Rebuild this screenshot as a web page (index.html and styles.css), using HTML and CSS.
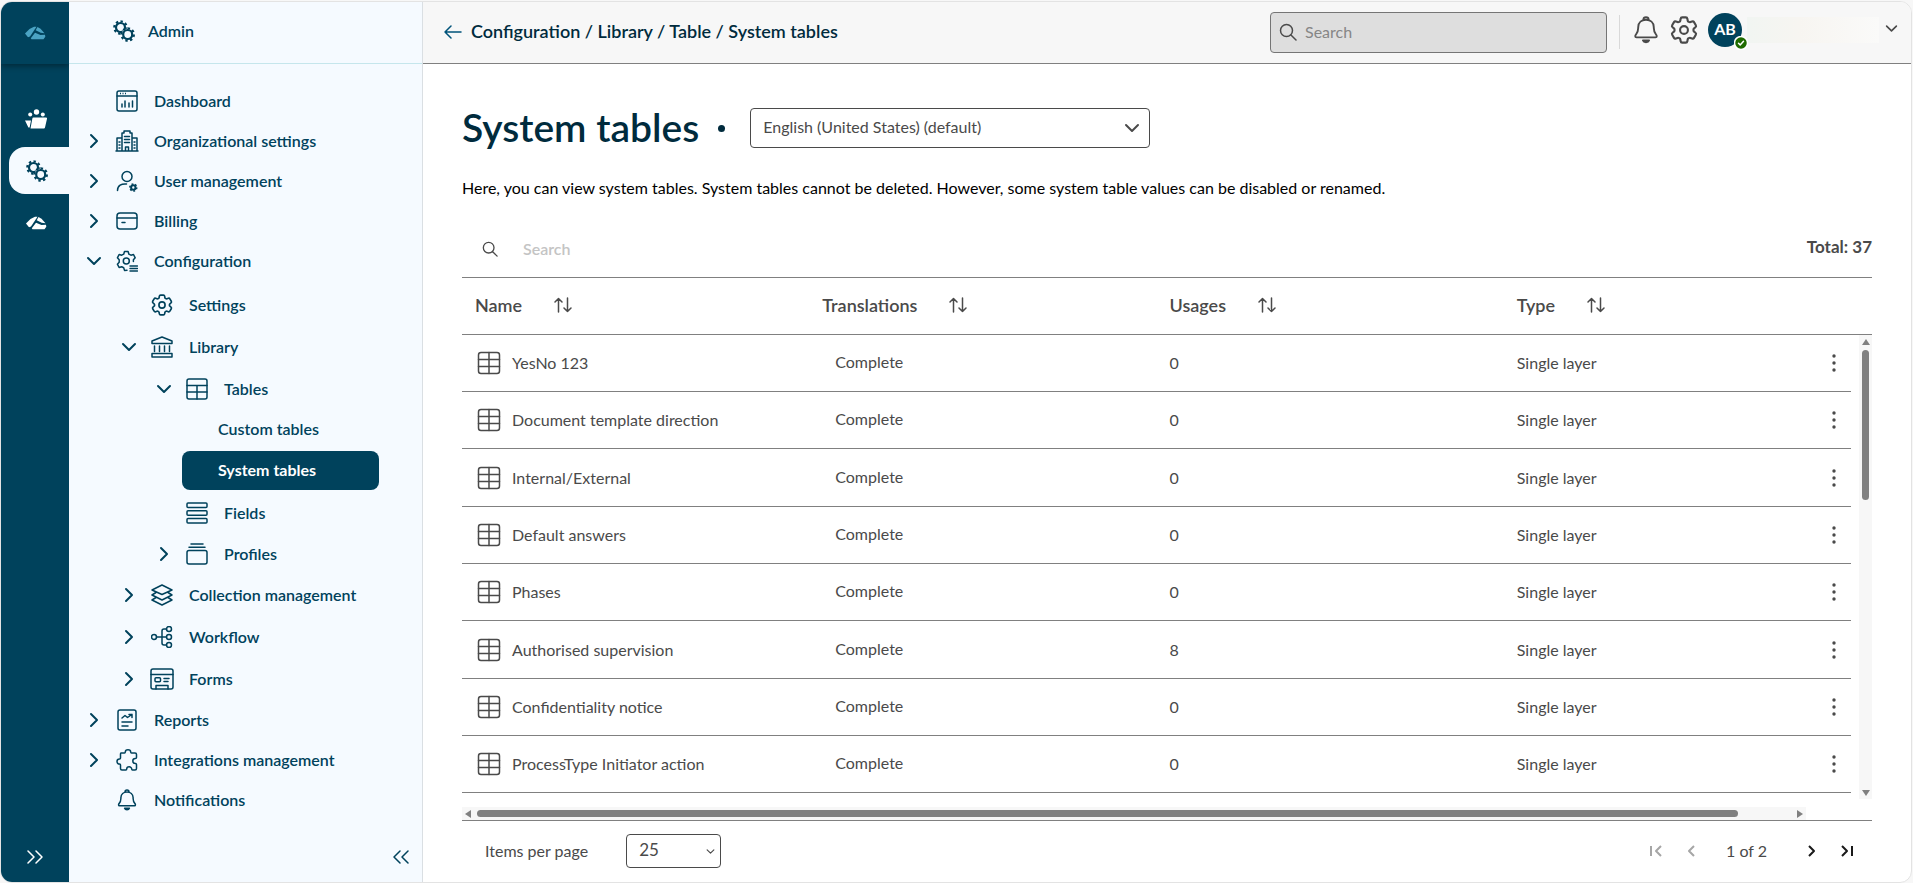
FILE: index.html
```
<!DOCTYPE html>
<html lang="en">
<head>
    <meta charset="UTF-8">
    <meta name="viewport" content="width=device-width, initial-scale=1.0">
    <title>System tables</title>
    <link rel="stylesheet" href="styles.css">
</head>
<body>
    <!-- Shared icons -->
    <svg class="sprite" aria-hidden="true">
        <symbol id="i-right" viewBox="0 0 16 16"><path d="M5 2l6 6-6 6" stroke-width="2"/></symbol>
        <symbol id="i-down" viewBox="0 0 16 16"><path d="M2 5l6 6 6-6" stroke-width="2"/></symbol>
        <symbol id="i-gear" viewBox="2 2 20 20">
            <path d="M9.594 3.94c.09-.542.56-.94 1.11-.94h2.593c.55 0 1.02.398 1.11.94l.213 1.281c.063.374.313.686.645.87.074.04.147.083.22.127.325.196.72.257 1.075.124l1.217-.456a1.125 1.125 0 0 1 1.37.49l1.296 2.247a1.125 1.125 0 0 1-.26 1.431l-1.003.827c-.293.241-.438.613-.43.992a7.723 7.723 0 0 1 0 .255c-.008.378.137.75.43.991l1.004.827c.424.35.534.955.26 1.43l-1.298 2.247a1.125 1.125 0 0 1-1.369.491l-1.217-.456c-.355-.133-.75-.072-1.076.124a6.47 6.47 0 0 1-.22.128c-.331.183-.581.495-.644.869l-.213 1.281c-.09.543-.56.94-1.11.94h-2.594c-.55 0-1.019-.398-1.11-.94l-.213-1.281c-.062-.374-.312-.686-.644-.87a6.52 6.52 0 0 1-.22-.127c-.325-.196-.72-.257-1.076-.124l-1.217.456a1.125 1.125 0 0 1-1.369-.49l-1.297-2.247a1.125 1.125 0 0 1 .26-1.431l1.004-.827c.292-.24.437-.613.43-.991a6.932 6.932 0 0 1 0-.255c.007-.38-.138-.751-.43-.992l-1.004-.827a1.125 1.125 0 0 1-.26-1.43l1.297-2.247a1.125 1.125 0 0 1 1.37-.491l1.216.456c.356.133.751.072 1.076-.124.072-.044.146-.086.22-.128.332-.183.582-.495.644-.869l.214-1.28Z"/>
            <circle cx="12" cy="12" r="2.8"/>
        </symbol>
        <symbol id="i-gears" viewBox="0 0 22 22">
            <circle cx="7.500" cy="7.500" r="4.500" stroke-width="2.200"/>
            <circle cx="7.500" cy="7.500" r="6.200" stroke-width="2.200" pathLength="16" stroke-dasharray="1 1" stroke-linecap="butt"/>
            <circle class="gap" cx="14.700" cy="14.500" r="6"/>
            <circle cx="14.700" cy="14.500" r="4.500" stroke-width="2.200"/>
            <circle cx="14.700" cy="14.500" r="6.200" stroke-width="2.200" pathLength="16" stroke-dasharray="1 1" stroke-linecap="butt"/>
        </symbol>
        <symbol id="i-bell" viewBox="0 0 22 22">
            <path d="M3.500 16.800c-1.300 0-1.100-1.600-.3-2.400 1.800-1.800 1.600-3.400 1.700-5.800C5 5.200 7.600 3 11 3s6 2.200 6.100 5.600c.1 2.400-.1 4 1.700 5.800.8.8 1 2.400-.3 2.400zM9 2.800C9 .4 13 .4 13 2.800M8.600 19.200a2.500 2 0 0 0 4.800 0z"/>
        </symbol>
        <symbol id="i-search" viewBox="0 0 18 18"><circle cx="7.500" cy="7.500" r="6"/><path d="M12 12l5 5"/></symbol>
        <symbol id="i-logo" viewBox="0 0 22 14">
            <path d="M1 7.500L5.500 3 10 .8h2.500L6 10.500l-2 .8z" class="solid"/>
            <path d="M13.500 1l3 1.700 4 4.500-3.800-.4-5-2.600z" class="solid"/>
            <path d="M6.800 12.300L11 6.800l5.500 2.200 4.500-.2.300 2-1.800 2.400H7.500z" class="solid"/>
        </symbol>
        <symbol id="i-grid" viewBox="0 0 24 24">
            <rect x="1.500" y="1.500" width="21" height="21" rx="2.500"/><path d="M12 1.500v21M1.500 8.500h21M1.500 15.500h21"/>
        </symbol>
        <symbol id="i-sort" viewBox="0 0 18 16"><path d="M4.500 15V1.500M1 5l3.500-3.500L8 5M13.500 1v13.500M10 11l3.500 3.500L17 11"/></symbol>
    </svg>

    <div class="app">
        <aside class="rail">
            <a class="rail-logo" href="#" aria-label="Home"><svg class="logo"><use href="#i-logo"/></svg></a>
            <nav class="rail-nav">
                <a href="#" aria-label="Cases">
                    <svg viewBox="0 0 22 20"><g class="solid"><circle cx="11.500" cy="3" r="2.700"/><circle cx="5.200" cy="5.600" r="2"/><circle cx="17.800" cy="5.600" r="2"/><path d="M8.500 8.500H21a1 1 0 0 1 1 1.200l-2 8.800a1.200 1.200 0 0 1-1.200 1H5.500l1.800-9.800a1.300 1.300 0 0 1 1.200-1.200zM0 11.500h6L4.600 18.500H3.400z"/></g></svg>
                </a>
                <a class="active" href="#" aria-label="Admin"><svg><use href="#i-gears"/></svg></a>
                <a href="#" aria-label="Apps"><svg class="logo"><use href="#i-logo"/></svg></a>
            </nav>
            <button class="rail-expand" aria-label="Expand"><svg viewBox="0 0 16 14"><path d="M1 1l6 6-6 6M9 1l6 6-6 6"/></svg></button>
        </aside>

        <aside class="sidebar">
            <div class="sidebar-head"><svg><use href="#i-gears"/></svg>Admin</div>
            <ul class="menu">
                <li><div class="item leaf"><a href="#">
                    <svg viewBox="0 0 22 22"><rect x="1" y="1" width="20" height="20" rx="2"/><path d="M1 6h20M6 17v-3M9 17v-6M13 17v-4M16.500 17v-6"/><path d="M4 3.600h6" stroke-dasharray="1 1.500" stroke-linecap="butt"/></svg>Dashboard</a></div></li>
                <li><div class="item"><button aria-label="Toggle"><svg><use href="#i-right"/></svg></button><a href="#">
                    <svg class="wide" viewBox="0 0 24 22"><path d="M1 21h22M2 21V8h5M17 8h5v13M7 21V3h2V1h6v2h2v18M10.500 21v-4h3v4M9.500 6.500h5M9.500 9.500h5M9.500 12.500h5M4 12h1M4 15h1M4 18h1M19 12h1M19 15h1M19 18h1"/></svg>Organizational settings</a></div></li>
                <li><div class="item"><button aria-label="Toggle"><svg><use href="#i-right"/></svg></button><a href="#">
                    <svg viewBox="0 0 22 22"><circle cx="11" cy="6.500" r="5"/><path d="M1.500 20.500c0-5 4-7 9-6.500"/><circle cx="17.300" cy="17.500" r="2.200" stroke-width="2"/><circle cx="17.300" cy="17.500" r="3.500" pathLength="12" stroke-dasharray="1 1" stroke-linecap="butt"/></svg>User management</a></div></li>
                <li><div class="item"><button aria-label="Toggle"><svg><use href="#i-right"/></svg></button><a href="#">
                    <svg viewBox="0 0 22 22"><rect x="1" y="3" width="20" height="16" rx="3"/><path d="M1 8h20M6 12.500h3"/></svg>Billing</a></div></li>
                <li><div class="item"><button aria-label="Toggle"><svg><use href="#i-down"/></svg></button><a href="#">
                    <svg viewBox="0 0 22 22"><path d="M11 20.200l-2.500.2-.8-2.700-2-.9-2.600.7-1.700-3.300 1.800-2v-2.400l-1.800-2 1.700-3.300 2.600.7 2-1L8.500 1.500h3.600l.8 2.700 2 1 2.600-.7 1.700 3.300-1.800 2v1.700"/><circle cx="10.300" cy="11" r="3"/><path d="M14 16h7.500M14 18.500h7.500M14 21h7.500" stroke-width="1.400"/></svg>Configuration</a></div>
                    <ul>
                        <li><div class="item leaf"><a href="#"><svg><use href="#i-gear"/></svg>Settings</a></div></li>
                        <li><div class="item"><button aria-label="Toggle"><svg><use href="#i-down"/></svg></button><a href="#">
                            <svg viewBox="0 0 22 22"><path d="M1 7.500V5l10-4 10 4v2.500zM1 17.500h20V21H1zM3.500 10v5.500M8.500 10v5.500M13.500 10v5.500M18.500 10v5.500"/></svg>Library</a></div>
                            <ul class="level-3">
                                <li><div class="item"><button aria-label="Toggle"><svg><use href="#i-down"/></svg></button><a href="#">
                                    <svg viewBox="0 0 22 22"><rect x="1" y="1" width="20" height="20" rx="2"/><path d="M1 7.500h20M1 14h20M11 7.500V21"/></svg>Tables</a></div>
                                    <ul class="level-4">
                                        <li><a href="#">Custom tables</a></li>
                                        <li><a class="current" href="#">System tables</a></li>
                                    </ul>
                                </li>
                                <li><div class="item leaf"><a href="#">
                                    <svg viewBox="0 0 22 22"><rect x="1" y="1" width="20" height="4.500" rx="1"/><rect x="1" y="8.700" width="20" height="4.500" rx="1"/><rect x="1" y="16.500" width="20" height="4.500" rx="1"/></svg>Fields</a></div></li>
                                <li><div class="item"><button aria-label="Toggle"><svg><use href="#i-right"/></svg></button><a href="#">
                                    <svg viewBox="0 0 22 22"><rect x="1" y="7.500" width="20" height="13.500" rx="2"/><path d="M3 4.200h16M5 1h12"/></svg>Profiles</a></div></li>
                            </ul>
                        </li>
                        <li><div class="item"><button aria-label="Toggle"><svg><use href="#i-right"/></svg></button><a href="#">
                            <svg viewBox="0 0 22 22"><path d="M11 1l10 5-10 4.500L1 6zM5 8.500L1 11l10 5 10-5-4-2.500M5 13.500L1 16l10 5 10-5-4-2.500"/></svg>Collection management</a></div></li>
                        <li><div class="item"><button aria-label="Toggle"><svg><use href="#i-right"/></svg></button><a href="#">
                            <svg viewBox="0 0 22 22"><circle cx="3" cy="11" r="2.500"/><circle cx="18" cy="3" r="2.500"/><circle cx="18" cy="11" r="2.500"/><circle cx="18" cy="19" r="2.500"/><path d="M5.500 11h10M15.500 3H13a2 2 0 0 0-2 2v12a2 2 0 0 0 2 2h2.500"/></svg>Workflow</a></div></li>
                        <li><div class="item"><button aria-label="Toggle"><svg><use href="#i-right"/></svg></button><a href="#">
                            <svg class="wide" viewBox="0 0 24 22"><rect x="1" y="1" width="22" height="20" rx="2"/><path d="M1 6.500h22M14 10.500h5M14 13.500h4M6 21v-3.500h12V21"/><rect x="5" y="9.700" width="5.500" height="4" rx="1"/></svg>Forms</a></div></li>
                    </ul>
                </li>
                <li><div class="item"><button aria-label="Toggle"><svg><use href="#i-right"/></svg></button><a href="#">
                    <svg viewBox="0 0 22 22"><rect x="2" y="1" width="18" height="20" rx="2"/><path d="M6 9l3-2.500 2.500 2L16 5.500M13 5.500h3v3M6 13h10M6 17h6"/></svg>Reports</a></div></li>
                <li><div class="item"><button aria-label="Toggle"><svg><use href="#i-right"/></svg></button><a href="#">
                    <svg viewBox="0 0 22 22"><path d="M5 4h3.500c.6 0 .8-.4.800-1a2.700 2.200 0 0 1 5.400 0c0 .6.200 1 .8 1H19c1 0 1.500.5 1.500 1.500v3c0 .7-.5 1-1.200 1a2.500 2.500 0 0 0 0 5c.7 0 1.200.3 1.200 1v4c0 1-.5 1.500-1.500 1.500h-2.500c-.8 0-.8-.5-.8-1a2.500 2.200 0 0 0-5 0c0 .5 0 1-.8 1H6c-1 0-1.500-.5-1.500-1.500V16c0-.7-.4-.9-1-.9a2.500 2.500 0 0 1 0-5c.6 0 1-.3 1-1V5c0-.7 0-1 .5-1z"/></svg>Integrations management</a></div></li>
                <li><div class="item leaf"><a href="#"><svg><use href="#i-bell"/></svg>Notifications</a></div></li>
            </ul>
            <button class="sidebar-collapse" aria-label="Collapse"><svg viewBox="0 0 16 14"><path d="M7 1L1 7l6 6M15 1L9 7l6 6"/></svg></button>
        </aside>

        <div class="page">
            <header class="topbar">
                <a class="back" href="#" aria-label="Back"><svg viewBox="0 0 18 14"><path d="M17 7H1M7 1L1 7l6 6"/></svg></a>
                <div class="breadcrumb">Configuration / Library / Table / System tables</div>
                <div class="global-search">
                    <svg><use href="#i-search"/></svg>
                    <input type="search" placeholder="Search" aria-label="Search">
                </div>
                <div class="user-tools">
                    <button aria-label="Notifications"><svg><use href="#i-bell"/></svg></button>
                    <button aria-label="Settings"><svg><use href="#i-gear"/></svg></button>
                    <div class="avatar">AB
                        <svg class="status" viewBox="0 0 14 14"><circle cx="7" cy="7" r="6.500"/><path d="M4.500 7.200l1.700 1.700 3.300-3.600"/></svg>
                    </div>
                    <div class="user-name"></div>
                    <button class="user-menu" aria-label="User menu"><svg><use href="#i-down"/></svg></button>
                </div>
            </header>

            <main>
                <div class="title-row">
                    <h1>System tables</h1>
                    <span class="dot"></span>
                    <div class="select language">
                        <select aria-label="Language"><option>English (United States) (default)</option></select>
                        <svg><use href="#i-down"/></svg>
                    </div>
                </div>
                <p class="intro">Here, you can view system tables. System tables cannot be deleted. However, some system table values can be disabled or renamed.</p>

                <div class="filter">
                    <svg><use href="#i-search"/></svg>
                    <input type="search" placeholder="Search" aria-label="Search tables">
                    <span class="total">Total: 37</span>
                </div>

                <div class="list">
                    <table>
                        <thead>
                            <tr>
                                <th><div>Name <button aria-label="Sort"><svg><use href="#i-sort"/></svg></button></div></th>
                                <th><div>Translations <button aria-label="Sort"><svg><use href="#i-sort"/></svg></button></div></th>
                                <th><div>Usages <button aria-label="Sort"><svg><use href="#i-sort"/></svg></button></div></th>
                                <th><div>Type <button aria-label="Sort"><svg><use href="#i-sort"/></svg></button></div></th>
                                <th class="actions"></th>
                            </tr>
                        </thead>
                        <tbody id="rows"></tbody>
                    </table>
                    <div class="side">
                        <div class="side-head"></div>
                        <div class="v-track">
                            <svg viewBox="0 0 8 6"><path d="M0 6l4-6 4 6z"/></svg>
                            <div class="v-thumb"></div>
                            <svg viewBox="0 0 8 6"><path d="M0 0l4 6 4-6z"/></svg>
                        </div>
                    </div>
                </div>
                <div class="h-track">
                    <svg viewBox="0 0 6 8"><path d="M6 0L0 4l6 4z"/></svg>
                    <div class="h-space"><div class="h-thumb"></div></div>
                    <svg viewBox="0 0 6 8"><path d="M0 0l6 4-6 4z"/></svg>
                </div>

                <div class="pager">
                    <label for="page-size">Items per page</label>
                    <div class="select page-size">
                        <select id="page-size"><option>25</option></select>
                        <svg><use href="#i-down"/></svg>
                    </div>
                    <div class="pages">
                        <button disabled aria-label="First page"><svg viewBox="0 0 12 12"><path d="M1 1v10M11 1L6 6l5 5"/></svg></button>
                        <button disabled aria-label="Previous page"><svg viewBox="0 0 12 12"><path d="M8 1L3 6l5 5"/></svg></button>
                        <span>1 of 2</span>
                        <button aria-label="Next page"><svg viewBox="0 0 12 12"><path d="M4 1l5 5-5 5"/></svg></button>
                        <button aria-label="Last page"><svg viewBox="0 0 12 12"><path d="M1 1l5 5-5 5M11 1v10"/></svg></button>
                    </div>
                </div>
            </main>
        </div>
    </div>

    <script>
        const tables = [
            { name: 'YesNo 123', usages: 0 },
            { name: 'Document template direction', usages: 0 },
            { name: 'Internal/External', usages: 0 },
            { name: 'Default answers', usages: 0 },
            { name: 'Phases', usages: 0 },
            { name: 'Authorised supervision', usages: 8 },
            { name: 'Confidentiality notice', usages: 0 },
            { name: 'ProcessType Initiator action', usages: 0 }
        ];

        const rows = document.getElementById('rows');

        tables.forEach(table => {
            const tr = document.createElement('tr');
            tr.innerHTML = `
                <td><div class="name"><svg><use href="#i-grid"/></svg>${table.name}</div></td>
                <td class="translation">Complete</td>
                <td>${table.usages}</td>
                <td>Single layer</td>
                <td class="actions"><button aria-label="Actions for ${table.name}"><svg viewBox="0 0 4 18"><circle cx="2" cy="2" r="1.700"/><circle cx="2" cy="9" r="1.700"/><circle cx="2" cy="16" r="1.700"/></svg></button></td>`;
            rows.appendChild(tr);
        });
    </script>
</body>
</html>
```
FILE: styles.css
```
* {
    box-sizing: border-box;
}

body {
    margin: 0;
    padding: 1px 1px 0 0;
    background: #f7f7f7;
    font-family: Lato, "Liberation Sans", sans-serif;
    font-size: 16px;
    line-height: 24px;
    color: #4a4a4a;
}

svg {
    display: block;
    flex: none;
    fill: none;
    stroke: currentColor;
    stroke-width: 1.5;
    stroke-linecap: round;
    stroke-linejoin: round;
}

.sprite {
    position: absolute;
    width: 0;
    height: 0;
}

.solid {
    fill: currentColor;
    stroke: none;
}

.gap {
    fill: #f5faff;
    stroke: none;
}

button, input, select {
    margin: 0;
    padding: 0;
    border: none;
    background: none;
    font: inherit;
    color: inherit;
}

button {
    cursor: pointer;
}

a {
    color: inherit;
    text-decoration: none;
}

ul {
    list-style: none;
    margin: 0;
    padding: 0;
}

.app {
    display: flex;
    min-height: calc(100vh - 1px);
    border: 1px solid #e3e3e3;
    border-radius: 12px;
    background: #fff;
    overflow: hidden;
}

/* Left rail */
.rail {
    flex: none;
    width: 68px;
    display: flex;
    flex-direction: column;
    background: #00425c;
    color: #fff;
}

.rail-logo {
    height: 62px;
    display: flex;
    align-items: center;
    justify-content: center;
    color: #4ba3c3;
    box-shadow: 0 2px 6px rgba(0, 0, 0, 0.4);
}

.rail svg {
    width: 22px;
    height: 22px;
}

.rail svg.logo {
    height: 14px;
}

.rail-nav {
    flex: 1;
    padding-top: 36px;
}

.rail-nav a {
    display: flex;
    align-items: center;
    justify-content: center;
    height: 38px;
    padding-left: 2px;
}

.rail-nav a.active {
    height: 47px;
    margin: 9px 0 10px 8px;
    padding: 0 4px 0 0;
    border-radius: 16px 0 0 16px;
    background: #f5faff;
    color: #00425c;
}

.rail-expand {
    height: 50px;
    display: flex;
    align-items: center;
    justify-content: center;
}

.rail .rail-expand svg {
    width: 16px;
    height: 14px;
}

/* Menu */
.sidebar {
    flex: none;
    width: 354px;
    display: flex;
    flex-direction: column;
    background: #f5faff;
    border-right: 1px solid #dadfe3;
    color: #00425c;
    font-weight: 600;
}

.sidebar-head {
    height: 62px;
    display: flex;
    align-items: center;
    gap: 13px;
    padding: 0 0 4px 44px;
    border-bottom: 1px solid #c5e6ec;
}

.sidebar svg {
    width: 22px;
    height: 22px;
}

.menu {
    flex: 1;
    padding-top: 17px;
}

.menu ul {
    padding-left: 35px;
}

.menu > li > ul {
    padding-top: 3px;
}

.item {
    display: flex;
    align-items: center;
    gap: 10px;
    height: 40px;
    padding-left: 13px;
}

.item.leaf {
    padding-left: 47px;
}

.item a {
    display: flex;
    align-items: center;
    gap: 16px;
}

.item svg.wide {
    width: 24px;
    margin: 0 -1px;
}

.item button {
    width: 24px;
    height: 24px;
    display: flex;
    align-items: center;
    justify-content: center;
}

.item button svg {
    width: 16px;
    height: 16px;
}

.menu ul .item {
    height: 42px;
}

.menu .level-3 .item {
    height: 41px;
}

.menu .level-4 {
    padding-left: 43px;
}

.level-4 a {
    display: block;
    width: 197px;
    height: 39px;
    margin: 1px 0 2px;
    padding-left: 36px;
    border-radius: 8px;
    line-height: 38px;
}

.level-4 a.current {
    background: #00425c;
    color: #fff;
    font-weight: 700;
}

.sidebar-collapse {
    align-self: flex-end;
    height: 50px;
    margin-right: 13px;
}

.sidebar .sidebar-collapse svg {
    width: 16px;
    height: 14px;
}

/* Top bar */
.page {
    flex: 1;
    min-width: 0;
}

.topbar {
    height: 62px;
    display: flex;
    align-items: center;
    padding: 0 13px 1px 21px;
    background: #f7f7f7;
    border-bottom: 1px solid #808080;
}

.back svg {
    width: 18px;
    height: 14px;
    color: #00537a;
}

.breadcrumb {
    flex: 1;
    margin-left: 9px;
    padding-bottom: 2px;
    font-size: 18px;
    font-weight: 600;
    color: #002b3d;
}

.global-search {
    display: flex;
    align-items: center;
    gap: 8px;
    width: 337px;
    height: 41px;
    padding: 0 8px;
    background: #dedede;
    border: 1px solid #757575;
    border-radius: 4px;
}

.global-search svg {
    width: 18px;
    height: 18px;
}

.global-search input {
    flex: 1;
    min-width: 0;
}

.global-search input::placeholder {
    color: #868686;
}

.user-tools {
    display: flex;
    align-items: center;
    height: 34px;
    margin-left: 12px;
    padding: 0 0 4px 12px;
    border-left: 1px solid #d9d9d9;
}

.user-tools button {
    margin-right: 10px;
}

.user-tools button svg {
    width: 28px;
    height: 28px;
}

.avatar {
    position: relative;
    width: 34px;
    height: 34px;
    border-radius: 50%;
    background: #00425c;
    color: #fff;
    font-weight: 700;
    line-height: 32px;
    text-align: center;
}

.status {
    position: absolute;
    right: -6px;
    bottom: -3px;
    width: 14px;
    height: 14px;
    fill: #1f6b00;
    stroke: #fff;
}

.user-name {
    width: 132px;
    height: 26px;
    margin: 0 6px 0 5px;
    background: linear-gradient(90deg, #f1f5f2, #f7f5f1 40%, #fafaf9);
}

.user-tools .user-menu {
    margin: 0 0 4px;
}

.user-tools .user-menu svg {
    width: 13px;
    height: 13px;
}

/* Content */
main {
    padding: 44px 39px 0;
}

.title-row {
    display: flex;
    align-items: center;
    height: 40px;
}

h1 {
    margin: 0;
    padding-bottom: 2px;
    font-size: 39px;
    line-height: 40px;
    font-weight: 600;
    color: #002b3d;
}

.dot {
    width: 7px;
    height: 7px;
    margin: 0 25px 0 19px;
    border-radius: 50%;
    background: #002b3d;
}

.select {
    position: relative;
}

.select select {
    appearance: none;
    width: 100%;
    height: 100%;
    padding: 0 12px 2px;
    border: 1px solid #4a4a4a;
    border-radius: 4px;
    background: #fff;
}

.select svg {
    position: absolute;
    top: 50%;
    right: 10px;
    width: 16px;
    height: 16px;
    margin-top: -8px;
    pointer-events: none;
}

.language {
    width: 400px;
    height: 40px;
}

.intro {
    margin: 28px 0 21px;
    color: #000;
}

.filter {
    display: flex;
    align-items: center;
    height: 57px;
    padding-left: 20px;
    border-bottom: 1px solid #808080;
}

.filter svg {
    width: 16px;
    height: 16px;
}

.filter input {
    flex: 1;
    margin-left: 25px;
}

.filter input::placeholder {
    color: #c4c4c4;
    font-weight: 600;
}

.total {
    padding-bottom: 4px;
    font-size: 17px;
    font-weight: 700;
}

.list {
    display: grid;
    grid-template-columns: 1fr 21px;
}

table {
    align-self: start;
    width: 100%;
    margin-bottom: 6px;
    table-layout: fixed;
    border-collapse: separate;
    border-spacing: 0;
}

th, td {
    width: 25%;
    height: 57px;
    padding: 0 0 0 13px;
    border-bottom: 1px solid #808080;
    text-align: left;
}

tbody tr:nth-child(3n) td {
    height: 58px;
}

th {
    padding-bottom: 2px;
    font-size: 18px;
    font-weight: 600;
}

th:nth-child(4) {
    width: 19%;
}

th div {
    display: flex;
    align-items: center;
    gap: 32px;
}

th svg {
    width: 18px;
    height: 16px;
}

.actions {
    width: 6%;
}

.actions button {
    display: block;
    margin-left: auto;
    padding: 0 15px;
}

.actions svg {
    width: 4px;
    height: 18px;
    fill: currentColor;
    stroke: none;
}

.name {
    display: flex;
    align-items: center;
    gap: 11px;
    padding-left: 2px;
}

.name svg {
    width: 24px;
    height: 24px;
}

td.translation {
    padding: 0 0 2px 26px;
}

.side {
    display: flex;
    flex-direction: column;
}

.side-head {
    height: 57px;
    border-bottom: 1px solid #808080;
}

.v-track {
    flex: 1;
    display: flex;
    flex-direction: column;
    align-items: center;
    justify-content: space-between;
    width: 13px;
    margin-left: auto;
    padding: 4px 0 3px;
    background: #f7f7f7;
}

.v-track svg, .h-track svg {
    width: 8px;
    height: 6px;
    fill: #808080;
    stroke: none;
}

.v-thumb {
    width: 7px;
    height: 150px;
    margin: 5px 0 auto;
    border-radius: 4px;
    background: #808080;
}

.h-track {
    display: flex;
    align-items: center;
    gap: 6px;
    height: 13px;
    margin: 8px 66px 0 0;
    padding: 0 3px;
    background: #f7f7f7;
}

.h-track svg {
    width: 6px;
    height: 8px;
}

.h-space {
    flex: 1;
}

.h-thumb {
    width: 96%;
    height: 7px;
    border-radius: 4px;
    background: #808080;
}

.pager {
    display: flex;
    align-items: center;
    height: 61px;
    padding-left: 23px;
    border-top: 1px solid #808080;
}

.page-size {
    width: 95px;
    height: 34px;
    margin-left: 38px;
    font-size: 17px;
}

.page-size svg {
    right: 6px;
    width: 9px;
    height: 9px;
    margin-top: -4px;
}

.pages {
    display: flex;
    align-items: center;
    margin-left: auto;
    padding-right: 7px;
}

.pages button {
    color: #1a1a1a;
    padding: 0 12px;
}

.pages button:disabled {
    color: #a6a6a6;
}

.pages svg {
    width: 12px;
    height: 12px;
    stroke-width: 2;
    stroke-linecap: butt;
}

.pages span {
    margin: 0 26px 0 16px;
}
```
